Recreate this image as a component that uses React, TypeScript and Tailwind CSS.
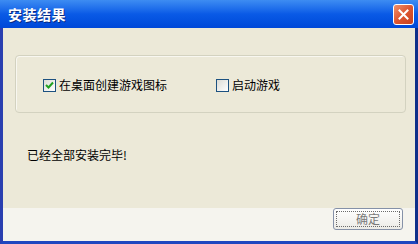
export default function App() {
  const font = { fontFamily: '"SimSun", "Noto Sans CJK SC", sans-serif' };

  return (
    <div className="w-[418px] h-[244px] flex flex-col overflow-hidden text-[12px] text-black" style={font}>
      {/* Title bar */}
      <div className="h-[28px] shrink-0 flex items-center justify-between pl-[8px] pr-[4px] bg-gradient-to-b from-[#3d8cf2] via-[#0a5ae6] to-[#0048d8]">
        <span className="text-white font-bold text-[14px] leading-none tracking-[0.5px] [text-shadow:1px_1px_0_#0a2a80]">
          安装结果
        </span>
        <button className="w-[21px] h-[21px] flex items-center justify-center rounded-[3px] border border-white bg-gradient-to-br from-[#f0906a] via-[#dd5530] to-[#c8411f]">
          <svg width="11" height="11" viewBox="0 0 11 11">
            <path d="M1.5 1.5 L9.5 9.5 M9.5 1.5 L1.5 9.5" stroke="white" strokeWidth="2" strokeLinecap="square" />
          </svg>
        </button>
      </div>

      {/* Body */}
      <div className="flex-1 flex flex-col border-l-[3px] border-l-[#2a3fb0] border-r-[3px] border-r-[#0f2f8a] border-b-[3px] border-b-[#1f47c0] bg-[#ece9d8]">
        {/* Group box */}
        <div className="mt-[27px] ml-[12px] mr-[9px] h-[58px] rounded-[4px] border border-[#d3d2c0] shadow-[inset_1px_1px_0_#f8f7f0] flex items-center pl-[27px] pt-[2px]">
          <label className="flex items-center gap-[3px]">
            <span className="w-[13px] h-[13px] border border-[#1c5180] bg-gradient-to-br from-[#dcdcd6] to-white flex items-center justify-center">
              <svg width="9" height="9" viewBox="0 0 9 9">
                <path d="M1 4 L3.5 6.5 L8 1.5" fill="none" stroke="#21a121" strokeWidth="2" />
              </svg>
            </span>
            <span className="leading-none">在桌面创建游戏图标</span>
          </label>
          <label className="flex items-center gap-[3px] ml-[49px]">
            <span className="w-[13px] h-[13px] border border-[#1c5180] bg-gradient-to-br from-[#dcdcd6] to-white" />
            <span className="leading-none">启动游戏</span>
          </label>
        </div>

        {/* Message */}
        <div className="mt-[36px] ml-[24px] leading-none">已经全部安装完毕!</div>

        {/* Footer */}
        <div className="mt-auto h-[33px] bg-[#f5f4ee] flex items-start justify-end pr-[12px]">
          <button className="w-[70px] h-[22px] rounded-[3px] border border-[#8591a8] bg-gradient-to-b from-white to-[#ecebe6] p-[2px]">
            <span className="w-full h-full flex items-center justify-center border border-dotted border-[#6b6b6b] text-[#7a7a7a] leading-none">
              确定
            </span>
          </button>
        </div>
      </div>
    </div>
  );
}
